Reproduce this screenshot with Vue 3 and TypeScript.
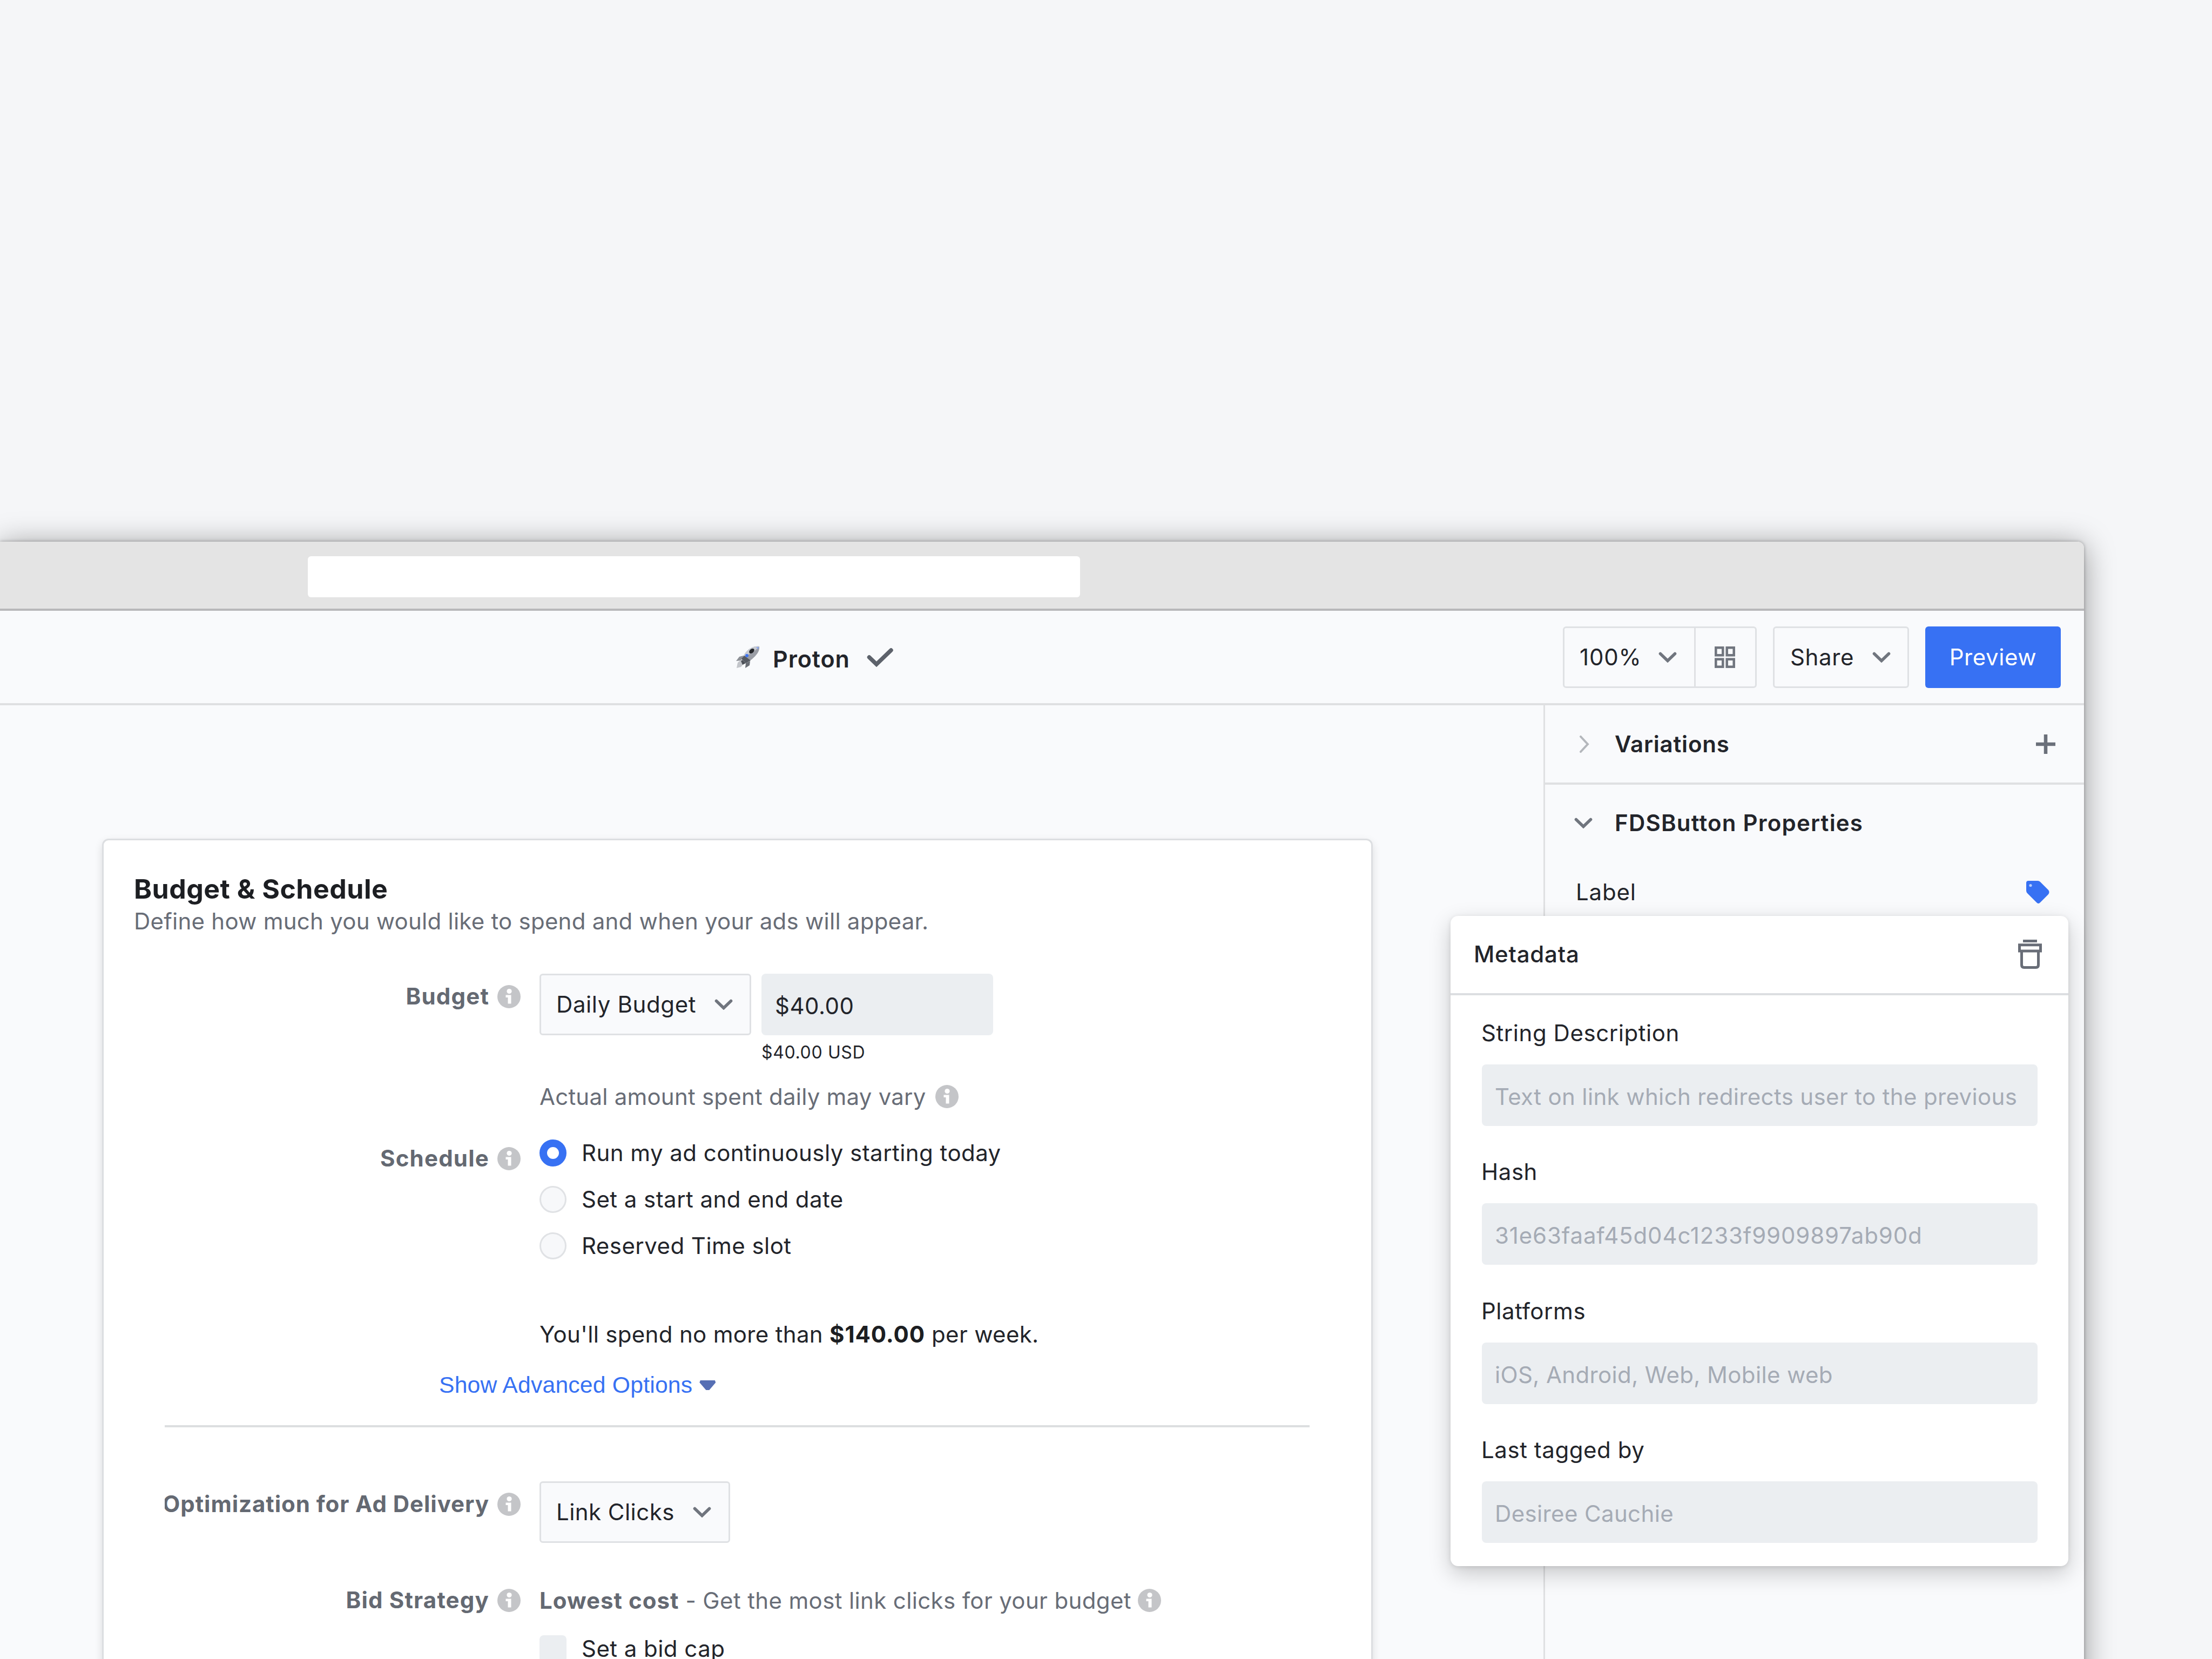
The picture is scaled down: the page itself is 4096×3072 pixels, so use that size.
<script setup lang="ts">
interface Field {
  label: string
  value: string
  hash?: boolean
}

const fields: Field[] = [
  { label: 'String Description', value: 'Text on link which redirects user to the previous' },
  { label: 'Hash', value: '31e63faaf45d04c1233f9909897ab90d', hash: true },
  { label: 'Platforms', value: 'iOS, Android, Web, Mobile web' },
  { label: 'Last tagged by', value: 'Desiree Cauchie' },
]

const scheduleOptions = [
  { label: 'Run my ad continuously starting today', checked: true },
  { label: 'Set a start and end date', checked: false },
  { label: 'Reserved Time slot', checked: false },
]
</script>

<template>
  <div class="stage">
    <svg class="defs" aria-hidden="true">
      <symbol id="info" viewBox="0 0 43 43">
        <circle cx="21.5" cy="21.5" r="21.5" fill="#c4c5c8" />
        <circle cx="22" cy="11.5" r="4.600" fill="#fff" />
        <path d="M15.500 18.500h10v16h-6v-11.500h-4z" fill="#fff" />
      </symbol>
      <symbol id="chevron" viewBox="0 0 34 20">
        <path d="M3.500 3.500l13.500 13L30.500 3.500" fill="none" stroke="#70757e" stroke-width="5.600" stroke-linecap="round" />
      </symbol>
    </svg>

    <div class="window">
      <div class="titlebar"><div class="address"></div></div>

      <header class="toolbar">
        <div class="document">
          <svg class="rocket" viewBox="0 0 44 42">
            <path d="M14 18L6 20L0 28L9 27z" fill="#8d9096" />
            <path d="M26 28L25 36L17 41L18 32z" fill="#6a6e75" />
            <path d="M10 25L3 31L1 41L9 39L15 32z" fill="#c3c5ca" />
            <path d="M12 26L9 28L12 35L18 32z" fill="#4d5158" />
            <path d="M43 1C34 0 26 3 18 12L10 24L18 32L29 25C38 17 44 10 43 1z" fill="#9a9da5" />
            <path d="M43 1C34 0 26 3 18 12L13 20C24 17 35 10 43 1z" fill="#c9ccd3" />
            <path d="M10 24L18 32L27 27L15 18z" fill="#565a62" />
            <circle cx="20" cy="18" r="3" fill="#3f74ef" />
            <ellipse cx="29" cy="9.500" rx="5.500" ry="3.600" transform="rotate(-42 29 9.500)" fill="#24262b" />
            <path d="M37 2l5 0-1 5z" fill="#8fa9ec" />
          </svg>
          <span class="name">Proton</span>
          <svg class="check" viewBox="0 0 50 36">
            <path d="M4.500 18L18 31L45 5" fill="none" stroke="#5d626b" stroke-width="7.500" stroke-linecap="round" />
          </svg>
        </div>
        <div class="actions">
          <div class="zoom-group">
            <button class="zoom"><span>100%</span><svg class="chev"><use href="#chevron" /></svg></button>
            <button class="grid-toggle">
              <svg class="grid-icon" viewBox="0 0 38 40" fill="none" stroke="#70757e" stroke-width="4.500">
                <rect x="2.300" y="2.300" width="13" height="14" />
                <rect x="22.700" y="2.300" width="13" height="14" />
                <rect x="2.300" y="23.700" width="13" height="14" />
                <rect x="22.700" y="23.700" width="13" height="14" />
              </svg>
            </button>
          </div>
          <button class="share"><span>Share</span><svg class="chev"><use href="#chevron" /></svg></button>
          <button class="preview">Preview</button>
        </div>
      </header>

      <div class="body">
        <main class="canvas">
          <section class="card">
            <h1>Budget &amp; Schedule</h1>
            <p class="subtitle">Define how much you would like to spend and when your ads will appear.</p>

            <div class="row budget">
              <div class="label"><b>Budget</b><svg class="info"><use href="#info" /></svg></div>
              <div class="content">
                <div class="controls">
                  <button class="select daily"><span>Daily Budget</span><svg class="chev"><use href="#chevron" /></svg></button>
                  <div class="amount">$40.00</div>
                </div>
                <div class="usd">$40.00 USD</div>
                <div class="note"><span>Actual amount spent daily may vary</span><svg class="info"><use href="#info" /></svg></div>
              </div>
            </div>

            <div class="row schedule">
              <div class="label"><b>Schedule</b><svg class="info"><use href="#info" /></svg></div>
              <div class="content">
                <div class="radios">
                  <div v-for="o in scheduleOptions" :key="o.label" class="option">
                    <i class="radio" :class="{ checked: o.checked }"></i><span>{{ o.label }}</span>
                  </div>
                </div>
                <p class="spend">You'll spend no more than <b>$140.00</b> per week.</p>
              </div>
            </div>

            <a class="advanced"><span>Show Advanced Options</span><i class="caret"></i></a>
            <hr />

            <div class="row optimization">
              <div class="label"><b>Optimization for Ad Delivery</b><svg class="info"><use href="#info" /></svg></div>
              <div class="content">
                <button class="select clicks"><span>Link Clicks</span><svg class="chev"><use href="#chevron" /></svg></button>
              </div>
            </div>

            <div class="row bid">
              <div class="label"><b>Bid Strategy</b><svg class="info"><use href="#info" /></svg></div>
              <div class="content">
                <div class="strategy"><span><b>Lowest cost</b> - Get the most link clicks for your budget</span><svg class="info"><use href="#info" /></svg></div>
                <div class="option cap"><i class="checkbox"></i><span>Set a bid cap</span></div>
              </div>
            </div>
          </section>
        </main>

        <aside class="panel">
          <div class="panel-row variations">
            <svg class="chev-right" viewBox="0 0 20 32"><path d="M3 2l13 14L3 30" fill="none" stroke="#b4b7bc" stroke-width="4" stroke-linecap="round" /></svg>
            <span class="heading">Variations</span>
            <svg class="plus" viewBox="0 0 36 36"><path d="M18 0v36M0 18h36" stroke="#6b707a" stroke-width="6.500" /></svg>
          </div>
          <div class="panel-row properties">
            <svg class="chev"><use href="#chevron" /></svg>
            <span class="heading">FDSButton Properties</span>
          </div>
          <div class="panel-row prop">
            <span>Label</span>
            <svg class="tag" viewBox="0 0 44 44">
              <path d="M5 1H22Q25 1 27 3L42 18Q45 22 42 26L27 41Q23.500 45 20 41L3 24Q1 22 1 19V5Q1 1 5 1z" fill="#3771f3" />
              <circle cx="9" cy="9.500" r="2.600" fill="#b9cdfb" />
            </svg>
          </div>

          <div class="popover">
            <div class="popover-head">
              <span>Metadata</span>
              <svg class="trash" viewBox="0 0 44 54" fill="none" stroke="#686d77" stroke-width="5">
                <path d="M9 2.500h26" />
                <path d="M2.500 9.800h39v11.200H2.500z" />
                <path d="M6.500 22v25q0 4.500 4.500 4.500h22q4.500 0 4.500-4.500V22" />
              </svg>
            </div>
            <div class="popover-body">
              <label v-for="f in fields" :key="f.label" class="field">
                <span class="field-label">{{ f.label }}</span>
                <span class="field-input" :class="{ hash: f.hash }">{{ f.value }}</span>
              </label>
            </div>
          </div>
        </aside>
      </div>
    </div>
  </div>
</template>

<style>
html,
body {
  margin: 0;
  background: #f5f6f8;
}
</style>

<style scoped>
* {
  box-sizing: border-box;
}
.stage {
  width: 4096px;
  height: 3072px;
  padding-top: 1003px;
  overflow: hidden;
  background: #f5f6f8;
  font-family: Inter, 'Liberation Sans', sans-serif;
  font-size: 42px;
  line-height: 44px;
  letter-spacing: 0.32px;
  color: #22242a;
}
.defs {
  position: absolute;
  width: 0;
  height: 0;
}
h1,
p,
hr {
  margin: 0;
}
svg {
  display: block;
  flex: none;
}
span {
  white-space: nowrap;
}
button {
  display: flex;
  align-items: center;
  margin: 0;
  padding: 0;
  font: inherit;
  letter-spacing: 0.6px;
  color: inherit;
}
.window {
  width: 3859px;
  height: 2200px;
  border-radius: 0 12px 0 0;
  background: #f9fafc;
  box-shadow: 0 6px 56px rgba(0, 0, 0, 0.4), 0 0 6px rgba(0, 0, 0, 0.3);
}
.titlebar {
  height: 128px;
  padding: 27px 0 0 570px;
  border-radius: 0 12px 0 0;
  background: #e4e4e4;
  border-bottom: 4px solid #b8b8ba;
}
.address {
  width: 1430px;
  height: 76px;
  border-radius: 6px;
  background: #fff;
}
.toolbar {
  display: flex;
  justify-content: space-between;
  align-items: center;
  height: 175px;
  padding: 0 43px 0 1363px;
  border-bottom: 4px solid #dfe0e2;
}
.document {
  display: flex;
  align-items: center;
}
.rocket {
  width: 44px;
  height: 42px;
}
.name {
  margin: 6px 31px 0 24px;
  font-size: 43px;
  font-weight: 600;
  letter-spacing: 0.9px;
}
.check {
  width: 50px;
  height: 36px;
}
.actions {
  display: flex;
  gap: 30px;
}
.zoom-group {
  display: flex;
  width: 359px;
  height: 114px;
  border: 3px solid #dfe1e4;
  border-radius: 6px;
}
.zoom {
  width: 243px;
  padding-left: 28px;
  border: 0;
  border-right: 3px solid #dfe1e4;
  background: none;
  letter-spacing: 0.8px;
}
.zoom .chev {
  margin-left: 31px;
}
.grid-toggle {
  flex: 1;
  justify-content: center;
  padding-right: 2px;
  border: 0;
  background: none;
}
.grid-icon {
  width: 38px;
  height: 40px;
}
.chev {
  width: 34px;
  height: 20px;
}
.share {
  width: 252px;
  height: 114px;
  padding-left: 29px;
  border: 3px solid #dfe1e4;
  border-radius: 6px;
  background: #f9fafc;
}
.share .chev {
  margin-left: 34px;
}
.preview {
  justify-content: center;
  width: 251px;
  height: 114px;
  border: 0;
  border-radius: 6px;
  background: #3771f3;
  color: #fff;
}
.body {
  display: flex;
}
.canvas {
  width: 2858px;
  height: 1890px;
  padding: 247px 0 0 189px;
}
.card {
  width: 2353px;
  height: 1700px;
  padding: 60px 0 0 56px;
  border: 3px solid #dcdee1;
  border-radius: 12px;
  background: #fff;
  box-shadow: 0 6px 16px rgba(0, 0, 0, 0.12);
}
h1 {
  font-size: 50px;
  line-height: 60px;
  font-weight: 700;
  letter-spacing: 0.5px;
  color: #1c1e22;
}
.subtitle {
  margin-top: 2px;
  line-height: 56px;
  letter-spacing: 0.24px;
  color: #686d77;
}
.row {
  display: flex;
  gap: 35px;
  margin-left: 57px;
}
.label {
  display: flex;
  justify-content: flex-end;
  gap: 15px;
  width: 659px;
  align-self: flex-start;
  white-space: nowrap;
  color: #646972;
}
.label b {
  margin-top: -1px;
  font-weight: 700;
  letter-spacing: 1.2px;
}
.info {
  width: 43px;
  height: 43px;
}
.budget {
  margin-top: 69px;
}
.budget .label {
  margin-top: 21px;
}
.controls {
  display: flex;
  gap: 19px;
}
.select {
  height: 114px;
  padding-left: 28px;
  border: 3px solid #dfe1e4;
  border-radius: 6px;
  background: #f9fafc;
}
.daily {
  width: 392px;
}
.daily .chev,
.clicks .chev {
  margin-left: 34px;
}
.clicks {
  width: 353px;
  letter-spacing: 0.45px;
}
.amount {
  width: 429px;
  height: 114px;
  padding: 5px 0 0 25px;
  border-radius: 8px;
  background: #ebeef1;
  line-height: 110px;
  letter-spacing: 0.5px;
}
.usd {
  margin: 12px 0 0 411px;
  font-size: 32px;
  line-height: 40px;
  letter-spacing: 0.65px;
}
.note {
  display: flex;
  gap: 17px;
  margin-top: 40px;
  letter-spacing: 0.22px;
  color: #686d77;
}
.schedule {
  margin-top: 57px;
}
.schedule .label {
  margin-top: 14px;
}
.radios {
  display: flex;
  flex-direction: column;
  gap: 36px;
}
.option {
  display: flex;
  align-items: center;
  gap: 28px;
  height: 50px;
  letter-spacing: 0.45px;
}
.radio {
  width: 50px;
  height: 50px;
  border: 3px solid #e0e2e5;
  border-radius: 50%;
  background: #f7f8fa;
}
.radio.checked {
  border: 14px solid #3771f3;
  background: #fff;
}
.spend {
  margin: 117px 0 0;
}
.spend b {
  letter-spacing: 0.9px;
  color: #1c1e22;
}
.advanced {
  display: flex;
  align-items: center;
  gap: 13px;
  margin: 49px 0 0 565px;
  font-family: 'Liberation Sans', Arial, sans-serif;
  font-size: 42.7px;
  letter-spacing: 0.2px;
  color: #3771f3;
}
.caret {
  width: 30px;
  height: 18px;
  margin-top: 2px;
  background: #566fb4;
  clip-path: polygon(5% 0, 95% 0, 100% 22%, 60% 100%, 40% 100%, 0 22%);
}
hr {
  width: 2120px;
  height: 4px;
  margin: 53px 0 0 57px;
  border: 0;
  background: #dcdee0;
}
.optimization {
  margin-top: 100px;
}
.optimization .label {
  margin-top: 21px;
  overflow-x: clip;
}
.optimization .label b {
  letter-spacing: 0.95px;
}
.bid {
  margin-top: 85px;
}
.strategy {
  display: flex;
  gap: 12px;
  letter-spacing: 0.36px;
  color: #686d77;
}
.strategy b {
  letter-spacing: 1px;
  color: #646972;
}
.cap {
  margin-top: 42px;
}
.checkbox {
  width: 50px;
  height: 50px;
  border-radius: 8px;
  background: #ebeef1;
}
.panel {
  position: relative;
  flex: 1;
  border-left: 3px solid #dfe0e2;
}
.panel-row {
  display: flex;
  align-items: center;
}
.heading {
  font-weight: 600;
}
.variations {
  height: 147px;
  padding: 0 53px 0 63px;
  border-bottom: 4px solid #dfe0e2;
}
.variations .heading {
  margin-left: 46px;
  letter-spacing: 0.8px;
}
.chev-right {
  width: 20px;
  height: 32px;
}
.plus {
  width: 36px;
  height: 36px;
  margin-left: auto;
}
.properties {
  height: 142px;
  padding-left: 54px;
}
.properties .heading {
  margin-left: 41px;
  letter-spacing: 1.2px;
}
.prop {
  justify-content: space-between;
  height: 116px;
  padding: 0 64px 2px 57px;
  letter-spacing: 0.8px;
}
.tag {
  width: 44px;
  height: 44px;
}
.popover {
  position: absolute;
  left: -175px;
  top: 390px;
  width: 1144px;
  height: 1204px;
  border-radius: 14px;
  background: #fff;
  box-shadow: 0 14px 40px rgba(0, 0, 0, 0.2), 0 2px 8px rgba(0, 0, 0, 0.1);
}
.popover-head {
  display: flex;
  justify-content: space-between;
  align-items: center;
  height: 147px;
  padding: 0 49px 2px 43px;
  border-bottom: 4px solid #dcdee1;
  font-weight: 500;
  letter-spacing: 0.75px;
}
.trash {
  width: 44px;
  height: 54px;
}
.popover-body {
  padding: 48px 57px 0 58px;
}
.field {
  display: block;
  height: 257.4px;
}
.field-label {
  display: block;
  margin-left: -1px;
  letter-spacing: 0.55px;
}
.field-input {
  display: block;
  height: 114px;
  margin-top: 36px;
  padding: 4px 20px 0 24px;
  border-radius: 8px;
  background: #ebeef1;
  line-height: 112px;
  letter-spacing: 0.36px;
  color: #a5abb5;
}
.field-input.hash {
  letter-spacing: 0.85px;
}
</style>
